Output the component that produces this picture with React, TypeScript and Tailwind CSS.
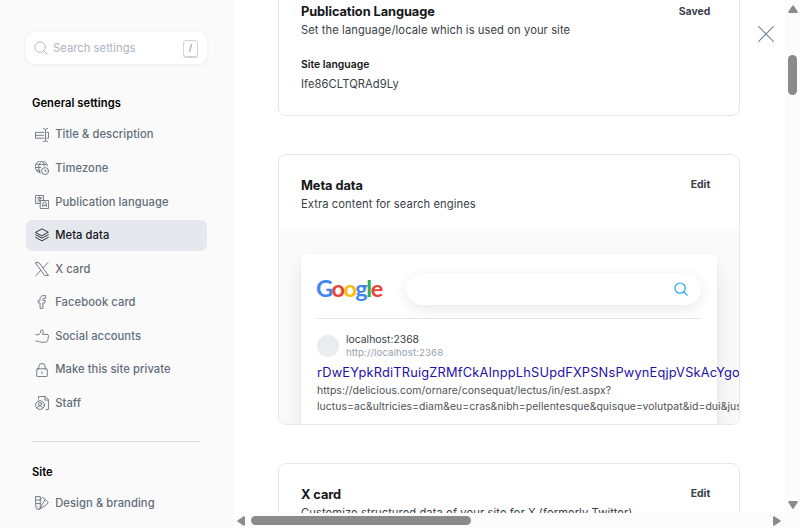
import React from 'react';

type IconProps = { children: React.ReactNode; className?: string };

function Icon({ children, className = '' }: IconProps) {
  return (
    <svg
      viewBox="0 0 24 24"
      fill="none"
      stroke="currentColor"
      strokeWidth="1.5"
      strokeLinecap="round"
      strokeLinejoin="round"
      className={`size-3.5 shrink-0 ${className}`}
    >
      {children}
    </svg>
  );
}

const icons = {
  title: (
    <Icon>
      <path d="M15.5 17.5H.9v-10h14.6M20.5 7.5h2.6v10h-2.6M18 3v19M14.5.9c2 0 3.5.9 3.5 2.6 0-1.7 1.5-2.6 3.5-2.6M14.5 23.300c2 0 3.500-.9 3.500-2.600 0 1.700 1.500 2.600 3.500 2.600M.9 12.500h14" />
    </Icon>
  ),
  timezone: (
    <Icon>
      <circle cx="17.300" cy="17.300" r="6" />
      <path d="M19.500 17.300h-2.200V15M8.500 20.300A10.500 10.500 0 1 1 21.300 8.500M8.800 20.300C7.300 18 6.400 14.800 6.400 11.200c0-5 1.900-9.300 4.400-10.400M12.500.8c1.700 1 3.100 4 3.500 7.700M.8 11.200h9M2.500 5.800h17M2.500 16.500h6" />
    </Icon>
  ),
  language: (
    <Icon>
      <path d="M9.500 14.500H.8V.8h13.700v8.700M9.500 9.500h13.700v13.700H9.500zM4 5h7.500M7.700 3v2M10 5c-.7 3-3 5-5.500 6M5.500 7c1 2 2.200 3 4 4M13.500 20v-5a3 3 0 0 1 6 0v5M13.500 17.500h6" />
    </Icon>
  ),
  layers: (
    <Icon>
      <path d="M1.200 7.300 12 1.500l10.800 5.800L12 13zM1.200 11.500 12 17.300l10.800-5.800M1.200 16 12 22l10.800-6" />
    </Icon>
  ),
  x: (
    <Icon>
      <path d="M1 1h5.800L23 23h-5.800zM1.800 23l8.300-9M22.200 1l-8.300 9" />
    </Icon>
  ),
  facebook: (
    <Icon>
      <path d="M17.500 1h-3C11 1 8.700 3.200 8.700 6.500V9.300H5.700v4.300h3V23h4.800v-9.400h3.300l.9-4.300h-4.200V7c0-.9.500-1.500 1.500-1.500h2.500z" />
    </Icon>
  ),
  thumb: (
    <Icon>
      <path d="M1.500 9.800h3.300c3.200 0 4.700-2.600 5.200-6.500C10.300.4 14 .9 14 4c0 2-.4 3.700-.9 5.200h7.400c2.700 0 3.200 2.400 2.300 4.300.4 1.200.1 2.300-.6 3.100.2 1.200-.1 2.200-.9 2.900 0 1.700-1.100 2.900-3 3-4.700.6-8.300.3-10.800-.7-1.900-.8-3.300-1.100-6-1.100" />
    </Icon>
  ),
  lock: (
    <Icon>
      <rect x="3" y="10" width="18" height="13.200" rx="1" />
      <path d="M6.500 10V6.300a5.500 5.500 0 0 1 11 0V10M12 15v3.500" />
    </Icon>
  ),
  staff: (
    <Icon>
      <circle cx="8.500" cy="15.500" r="7.500" />
      <circle cx="8.500" cy="13.500" r="2.800" />
      <path d="M4 21c.5-5.500 8.500-5.500 9 0M6 5V.9h11.500l5.500 5.500v16.700h-4M17 1v6h6" />
    </Icon>
  ),
  design: (
    <Icon>
      <path d="M1.500 1H9v18.500a3.700 3.700 0 0 1-7.500 0zM1.500 7H9M1.500 13H9M5.200 19v.2M9 6l4-3.500 4.500 3L9 20.500M17.500 6.500l5.300 4.500-4 5L7 22.800" />
    </Icon>
  ),
};

type Entry = { label: string; icon: React.ReactNode; active?: boolean };

const general: Entry[] = [
  { label: 'Title & description', icon: icons.title },
  { label: 'Timezone', icon: icons.timezone },
  { label: 'Publication language', icon: icons.language },
  { label: 'Meta data', icon: icons.layers, active: true },
  { label: 'X card', icon: icons.x },
  { label: 'Facebook card', icon: icons.facebook },
  { label: 'Social accounts', icon: icons.thumb },
  { label: 'Make this site private', icon: icons.lock },
  { label: 'Staff', icon: icons.staff },
];

function NavItem({ label, icon, active }: Entry) {
  return (
    <li
      className={`flex h-[31px] w-[181px] items-center gap-[6.2px] rounded-md pl-[9px] text-[11.2px] font-medium tracking-[0.08px] ${
        active ? 'bg-[#e5e8ed] text-[#15171a]' : 'text-[#626d79]'
      }`}
    >
      {icon}
      <span className="pt-[0.7px] whitespace-nowrap">{label}</span>
    </li>
  );
}

function CardHead({ title, description, action }: { title: string; description: string; action: string }) {
  return (
    <div className="flex items-start justify-between">
      <div>
        <h5 className="text-[12.8px] leading-[18px] font-bold tracking-[-0.07px] text-[#15171a]">{title}</h5>
        <p className="text-[11.2px] leading-[18px] tracking-[0.08px] whitespace-nowrap text-[#394047]">
          {description}
        </p>
      </div>
      <button className="mr-[6.8px] pt-[0.5px] text-[10.4px] leading-4 font-bold text-[#394047]">{action}</button>
    </div>
  );
}

function Arrow({ className = '' }: { className?: string }) {
  return (
    <svg viewBox="0 0 10 8" className={`h-2 w-2.5 fill-[#8b8b8b] ${className}`}>
      <path d="M4.200.7a1 1 0 0 1 1.600 0l3.800 5.700a1 1 0 0 1-.8 1.600H1.200a1 1 0 0 1-.8-1.600z" />
    </svg>
  );
}

export default function App() {
  return (
    <div className="flex h-[528px] w-[800px] overflow-hidden bg-white font-['Inter',sans-serif]">
      <aside className="w-[233px] shrink-0 bg-[#fafafa] pt-8 pl-[26px]">
        <div className="flex h-8 w-[181px] items-center rounded-lg bg-white pr-[9px] pl-[9px] shadow-[0_0_1px_rgba(0,0,0,0.08),0_1px_4px_rgba(0,0,0,0.05)]">
          <Icon className="-ml-px text-[#abb4be]">
            <circle cx="10.500" cy="10.500" r="9" />
            <path d="m17 17 5.500 5.500" />
          </Icon>
          <span className="ml-[5px] grow text-[11.2px] tracking-[0.05px] text-[#abb4be]">Search settings</span>
          <kbd className="flex h-[17px] w-[15px] items-center justify-center rounded-[3px] border border-[#ced4d9] font-['Inter',sans-serif] text-[8.8px] font-medium text-[#7c8b9a] shadow-[0_1px_#ced4d9]">
            /
          </kbd>
        </div>
        <h2 className="mt-[30px] ml-1.5 text-[11.2px] leading-[18px] font-semibold tracking-[0.05px] text-black">
          General settings
        </h2>
        <ul className="mt-[7px] flex flex-col gap-[2.58px]">
          {general.map((entry) => (
            <NavItem key={entry.label} {...entry} />
          ))}
        </ul>
        <div className="mt-[22px] ml-1.5 w-[169px] border-t border-[#dddedf]" />
        <h2 className="mt-[21px] ml-1.5 text-[11.2px] leading-[18px] font-semibold text-black">Site</h2>
        <ul className="mt-[7px]">
          <NavItem label="Design & branding" icon={icons.design} />
        </ul>
      </aside>

      <div className="flex w-[567px] flex-col">
        <div className="flex h-[513px]">
          <main className="flex w-[552px] overflow-hidden pl-[45px]">
            <div className="w-[462px] shrink-0">
              <section className="-mt-6 h-[140px] rounded-lg border border-[#e4e7eb] px-[22px] pt-[26px]">
                <CardHead
                  title="Publication Language"
                  description="Set the language/locale which is used on your site"
                  action="Saved"
                />
                <h6 className="mt-[18px] text-[10.4px] leading-4 font-semibold text-[#15171a]">Site language</h6>
                <p className="mt-[3px] text-[11.2px] leading-4 tracking-[0.08px] text-[#394047]">Ife86CLTQRAd9Ly</p>
              </section>

              <section className="mt-[38px] h-[271px] overflow-hidden rounded-lg border border-[#e4e7eb]">
                <div className="h-[76px] px-[22px] pt-[21.5px]">
                  <CardHead title="Meta data" description="Extra content for search engines" action="Edit" />
                </div>
                <div className="bg-[#fafafa] px-[22px] pt-[23px]">
                  <div className="h-[240px] rounded-[3px] bg-white px-4 pt-[19px] shadow-[0_0_1px_rgba(0,0,0,0.12),0_13px_20px_rgba(0,0,0,0.09)]">
                    <div className="flex h-[46px] border-b border-[#e5e7ea]">
                      <div className="w-[89px] shrink-0 font-['Lato',sans-serif] text-[23.5px] leading-[30px] font-bold tracking-[-1.5px]">
                        <span className="-ml-px text-[#4285f4]">G</span>
                        <span className="text-[#ea4335]">o</span>
                        <span className="text-[#fbbc05]">o</span>
                        <span className="text-[#4285f4]">g</span>
                        <span className="text-[#34a853]">l</span>
                        <span className="text-[#ea4335]">e</span>
                      </div>
                      <div className="flex h-8 grow items-center justify-end rounded-full bg-white pr-[13px] shadow-[0_0_1px_rgba(0,0,0,0.04),0_4px_14px_rgba(0,0,0,0.09)]">
                        <svg
                          viewBox="0 0 24 24"
                          fill="none"
                          stroke="currentColor"
                          strokeWidth="2"
                          strokeLinecap="round"
                          className="size-3.5 text-[#14a8ec]"
                        >
                          <circle cx="10.500" cy="10.500" r="8.800" />
                          <path d="m17 17 5.500 5.500" />
                        </svg>
                      </div>
                    </div>
                    <div className="mt-[14px] flex items-center gap-[7px]">
                      <span className="size-[22px] rounded-full bg-[#e9edf0]" />
                      <div className="text-[10.4px] leading-[13px]">
                        <div className="text-[#394047]">localhost:2368</div>
                        <div className="text-[9.6px] tracking-[0.12px] text-[#95a1ad]">http://localhost:2368</div>
                      </div>
                    </div>
                    <div className="mt-[5px] text-[12.8px] leading-[18px] tracking-[0.19px] whitespace-nowrap text-[#1e0fa8]">
                      rDwEYpkRdiTRuigZRMfCkAInppLhSUpdFXPSNsPwynEqjpVSkAcYgoLmTx
                    </div>
                    <div className="mt-px text-[10.4px] leading-4 tracking-[0.07px] whitespace-nowrap text-[#4d5156]">
                      https://delicious.com/ornare/consequat/lectus/in/est.aspx?
                      <br />
                      luctus=ac&amp;ultricies=diam&amp;eu=cras&amp;nibh=pellentesque&amp;quisque=volutpat&amp;id=dui&amp;justo
                    </div>
                  </div>
                </div>
              </section>

              <section className="mt-[38px] h-[140px] rounded-lg border border-[#e4e7eb] px-[22px] pt-[21.5px]">
                <CardHead
                  title="X card"
                  description="Customize structured data of your site for X (formerly Twitter)"
                  action="Edit"
                />
              </section>
            </div>
            <button className="mt-[26px] ml-[18px] size-4 shrink-0 text-[#6f7f8f]">
              <svg viewBox="0 0 16 16" fill="none" stroke="currentColor" strokeWidth="1.1" strokeLinecap="round">
                <path d="m.7.700 14.600 14.600M15.300.700.700 15.300" />
              </svg>
            </button>
          </main>
          <div className="flex w-[15px] shrink-0 flex-col items-center bg-[#fcfcfc] pt-[4.5px] pb-1">
            <Arrow />
            <div className="mt-[42.5px] h-10 w-[9px] rounded-full bg-[#8b8b8b]" />
            <Arrow className="mt-auto rotate-180" />
          </div>
        </div>
        <div className="flex h-[15px] items-center bg-[#fcfcfc] pl-[3px]">
          <Arrow className="-rotate-90" />
          <div className="ml-[5px] h-[9px] w-[220px] rounded-full bg-[#8b8b8b]" />
          <Arrow className="mr-[18px] ml-auto rotate-90" />
        </div>
      </div>
    </div>
  );
}
